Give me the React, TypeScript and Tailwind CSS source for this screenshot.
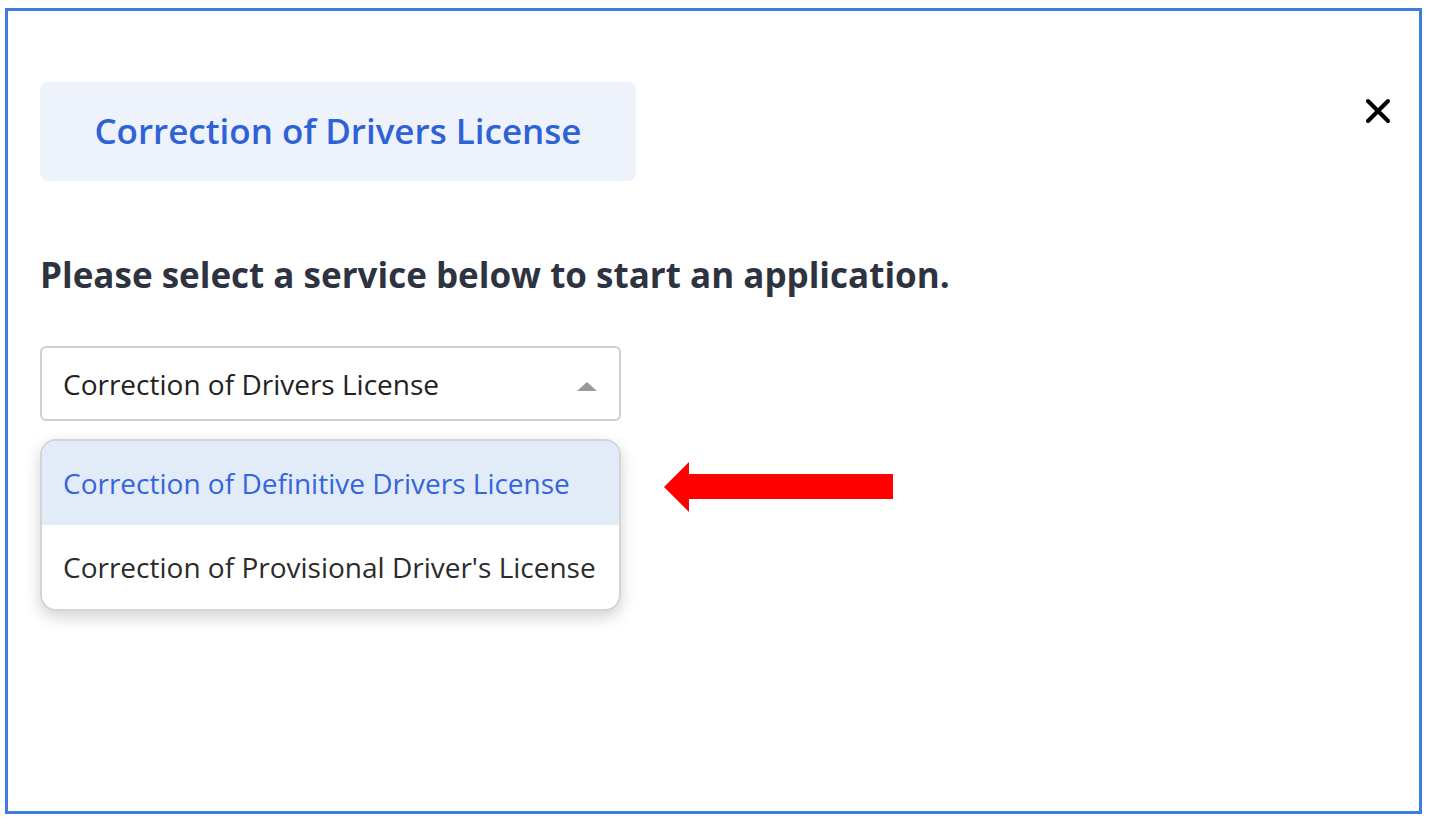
import { X } from "lucide-react"

const options = [
  { label: "Correction of Definitive Drivers License", active: true },
  { label: "Correction of Provisional Driver's License", active: false },
]

const App = () => {
  return (
    <div className="h-[824px] w-[1430px] bg-white pl-[5px] pt-[8px] font-['Open_Sans','Noto_Sans',sans-serif]">
      <div className="relative h-[806px] w-[1417px] border-[3px] border-[#3f7be0] bg-white">
        <button className="absolute right-[21px] top-[80px] text-black">
          <X className="h-[40px] w-[40px]" strokeWidth={2.4} />
        </button>

        <div className="pl-[32px] pt-[71px]">
          <div className="flex h-[99px] w-[596px] items-center justify-center rounded-lg bg-[#eef3fb]">
            <span className="text-[35px] font-semibold text-[#2f62d6]">Correction of Drivers License</span>
          </div>

          <h2 className="mt-[72px] text-[35px] leading-[44px] font-bold text-[#2d3340]">
            Please select a service below to start an application.
          </h2>

          <div className="mt-[49px] flex items-start">
            <div className="w-[581px]">
              <div className="flex h-[75px] items-center justify-between rounded-md border-2 border-[#cfcfcf] pl-[21px] pr-[22px]">
                <span className="text-[28px] text-[#222]">Correction of Drivers License</span>
                <span className="mt-[6px] h-0 w-0 border-x-[10px] border-b-[9px] border-x-transparent border-b-[#9a9a9a]" />
              </div>

              <div className="mt-[18px] overflow-hidden rounded-2xl border-2 border-[#d4d4d4] bg-white shadow-[0_6px_16px_rgba(0,0,0,0.18)]">
                {options.map((o) => (
                  <div
                    key={o.label}
                    className={
                      o.active
                        ? "flex h-[84px] items-center bg-[#e1ecf8] pl-[21px] text-[28px] text-[#3565d9]"
                        : "flex h-[84px] items-center pl-[21px] text-[28px] text-[#2b2b2b]"
                    }
                  >
                    {o.label}
                  </div>
                ))}
              </div>
            </div>

            <svg className="ml-[43px] mt-[115px]" width="230" height="52" viewBox="0 0 230 52">
              <polygon points="0,26 25,1 25,13 229,13 229,38 25,38 25,51" fill="#ff0000" />
            </svg>
          </div>
        </div>
      </div>
    </div>
  )
}

export default App
